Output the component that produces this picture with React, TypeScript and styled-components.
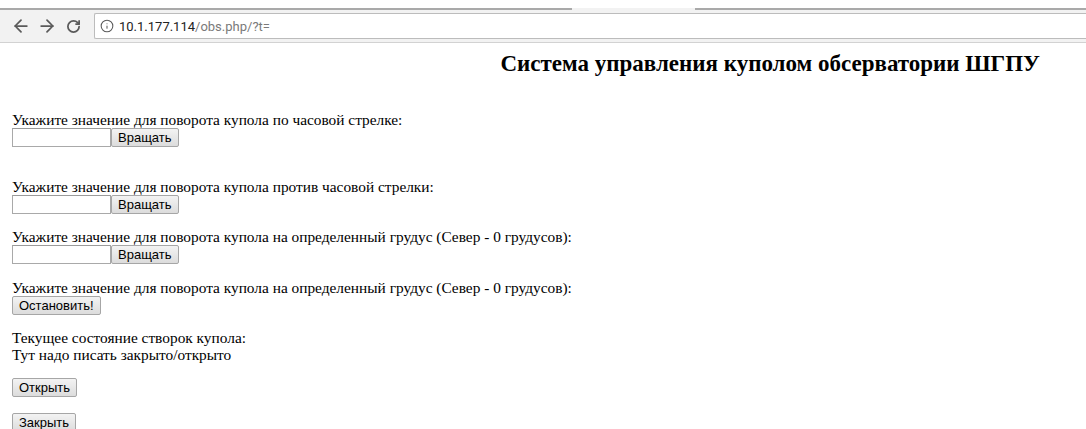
import React from "react";
import styled, { createGlobalStyle } from "styled-components";
import { ArrowLeft, ArrowRight, RotateCw, Info } from "lucide-react";

const GlobalStyle = createGlobalStyle`
  html, body {
    margin: 0;
    padding: 0;
    background: #ffffff;
  }
  body {
    font-family: "Liberation Serif", "Times New Roman", serif;
    font-size: 15.36px;
    color: #000;
  }
`;

// Browser chrome: tab strip edge + toolbar with the address field
const TabStrip = styled.div`
  height: 8px;
  background: #ffffff;
`;

const TabEdge = styled.div`
  display: flex;
  height: 2px;
`;

const EdgeLine = styled.div<{ $width?: number }>`
  flex: ${(p) => (p.$width ? `0 0 ${p.$width}px` : "1")};
  background: #a9a9a9;
`;

const ActiveTab = styled.div`
  flex: 0 0 123px;
  background: #f2f2f2;
`;

const Toolbar = styled.div`
  display: flex;
  align-items: flex-start;
  height: 33px;
  padding: 3px 0 0 8px;
  box-sizing: border-box;
  background: #f2f2f2;
  border-bottom: 1px solid #d2d2d2;
`;

const NavButton = styled.span`
  display: flex;
  align-items: center;
  justify-content: center;
  width: 26px;
  height: 26px;
  color: #5a5a5a;
`;

const AddressField = styled.div`
  flex: 1;
  display: flex;
  align-items: center;
  gap: 5px;
  height: 26px;
  margin-left: 8px;
  padding-left: 5px;
  box-sizing: border-box;
  background: #ffffff;
  border: 1px solid #bcbcbc;
  border-right: none;
  border-radius: 2px 0 0 2px;
  color: #5a5a5a;
`;

const UrlText = styled.span`
  font-family: Roboto, "Noto Sans", Arial, sans-serif;
  font-size: 13px;
  color: #7a7a7a;
`;

const UrlHost = styled.span`
  color: #222222;
`;

// Page body
const Page = styled.main`
  padding: 0 12px;
`;

const Title = styled.h2`
  margin: 8px 0 34px;
  padding-right: 34px;
  text-align: right;
  font-size: 23px;
  line-height: 26px;
  font-weight: bold;
`;

const Section = styled.form<{ $gap?: number }>`
  margin: 0 0 ${(p) => p.$gap ?? 14.4}px;
`;

const Label = styled.div`
  line-height: 17px;
  white-space: nowrap;
`;

const Row = styled.div`
  display: flex;
  height: 19px;
`;

const ValueInput = styled.input`
  width: 99px;
  height: 19px;
  margin: 0;
  padding: 1px 2px;
  box-sizing: border-box;
  border: 1px solid #a9a9a9;
  border-top-color: #9a9a9a;
  background: #ffffff;
  font-family: "Liberation Sans", Arial, sans-serif;
  font-size: 12.8px;
`;

const Button = styled.button`
  height: 19px;
  margin: 0;
  padding: 0 6px;
  box-sizing: border-box;
  border: 1px solid #a6a6a6;
  border-radius: 2px;
  background: linear-gradient(#f3f3f3, #dcdcdc);
  font-family: "Liberation Sans", Arial, sans-serif;
  font-size: 13px;
  line-height: 17px;
  color: #000;
  cursor: pointer;
`;

const rotations = [
  { text: "Укажите значение для поворота купола по часовой стрелке:", gap: 31 },
  { text: "Укажите значение для поворота купола против часовой стрелки:", gap: 14.4 },
  {
    text: "Укажите значение для поворота купола на определенный грудус (Север - 0 грудусов):",
    gap: 14.4,
  },
];

const App: React.FC = () => {
  return (
    <>
      <GlobalStyle />
      <TabStrip />
      <TabEdge>
        <EdgeLine $width={572} />
        <ActiveTab />
        <EdgeLine />
      </TabEdge>
      <Toolbar>
        <NavButton>
          <ArrowLeft size={20} strokeWidth={2.1} />
        </NavButton>
        <NavButton>
          <ArrowRight size={20} strokeWidth={2.1} />
        </NavButton>
        <NavButton>
          <RotateCw size={15} strokeWidth={2.8} />
        </NavButton>
        <AddressField>
          <Info size={14} strokeWidth={1.8} />
          <UrlText>
            <UrlHost>10.1.177.114</UrlHost>/obs.php/?t=
          </UrlText>
        </AddressField>
      </Toolbar>

      <Page>
        <Title>Система управления куполом обсерватории ШГПУ</Title>

        {rotations.map((r) => (
          <Section key={r.text} $gap={r.gap} onSubmit={(e) => e.preventDefault()}>
            <Label>{r.text}</Label>
            <Row>
              <ValueInput type="text" />
              <Button type="submit">Вращать</Button>
            </Row>
          </Section>
        ))}

        <Section onSubmit={(e) => e.preventDefault()}>
          <Label>
            Укажите значение для поворота купола на определенный грудус (Север - 0 грудусов):
          </Label>
          <Row>
            <Button type="submit">Остановить!</Button>
          </Row>
        </Section>

        <Section>
          <Label>Текущее состояние створок купола:</Label>
          <Label>Тут надо писать закрыто/открыто</Label>
        </Section>

        <Section $gap={16.4} onSubmit={(e) => e.preventDefault()}>
          <Row>
            <Button type="submit">Открыть</Button>
          </Row>
        </Section>

        <Section onSubmit={(e) => e.preventDefault()}>
          <Row>
            <Button type="submit">Закрыть</Button>
          </Row>
        </Section>
      </Page>
    </>
  );
};

export default App;
